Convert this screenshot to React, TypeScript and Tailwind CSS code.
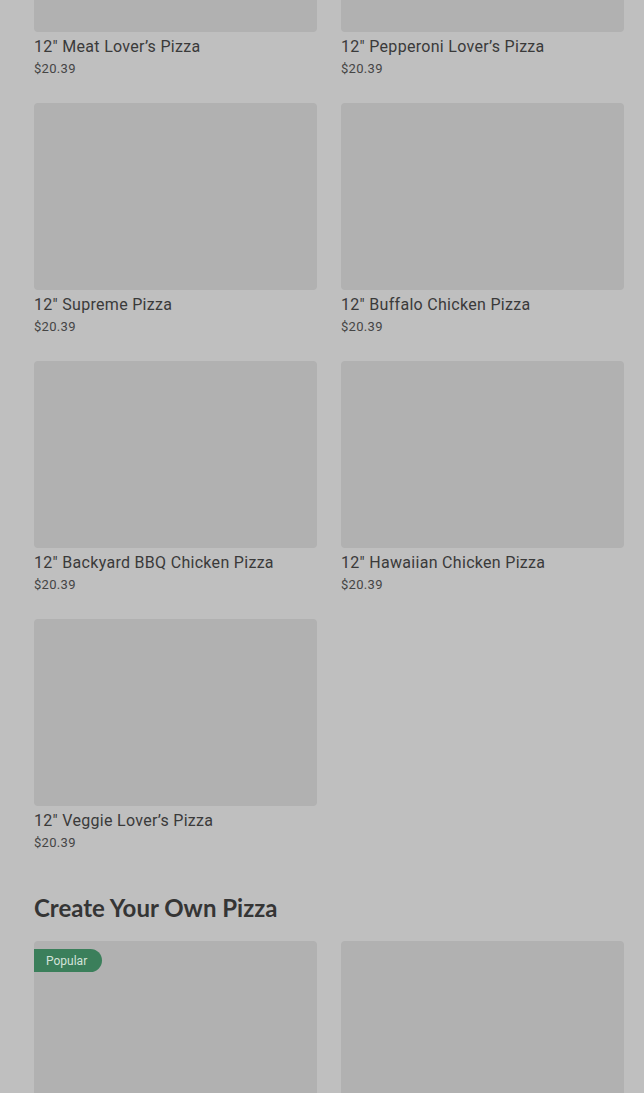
const pizzas = [
  "12\" Meat Lover’s Pizza",
  "12\" Pepperoni Lover’s Pizza",
  "12\" Supreme Pizza",
  "12\" Buffalo Chicken Pizza",
  "12\" Backyard BBQ Chicken Pizza",
  "12\" Hawaiian Chicken Pizza",
  "12\" Veggie Lover’s Pizza",
];

function PizzaCard({ name }: { name: string }) {
  return (
    <div className="flex flex-col">
      <div className="h-[187px] w-full rounded-sm bg-[#b1b1b1]" />
      <p className="mt-[5px] text-[16px] leading-5 tracking-[0.3px] text-[#3a3a3a]">{name}</p>
      <p className="mt-[3px] text-[13px] leading-[18px] tracking-[0.3px] text-[#454545]">$20.39</p>
    </div>
  );
}

export default function App() {
  return (
    <div
      className="h-[1093px] overflow-hidden bg-[#bfbfbf] pl-[34px] pr-[20px]"
      style={{ fontFamily: "Roboto, 'Noto Sans', sans-serif" }}
    >
      {/* list is scrolled, first row partly out of view */}
      <div className="-mt-[155px] grid grid-cols-2 gap-x-6 gap-y-[25px]">
        {pizzas.map((p) => (
          <PizzaCard key={p} name={p} />
        ))}
      </div>

      <h2
        className="mt-10 text-[24px] font-bold leading-8 text-[#353535]"
        style={{ fontFamily: "Lato, 'Open Sans', sans-serif" }}
      >
        Create Your Own Pizza
      </h2>

      <div className="mt-[17px] grid grid-cols-2 gap-x-6">
        <div className="relative h-[187px] rounded-sm bg-[#b1b1b1]">
          <span className="absolute left-0 top-2 flex h-[23px] items-center rounded-r-full bg-[#3b7f5b] pl-3 pr-[15px] text-[12px] text-[#d4e3da]">
            Popular
          </span>
        </div>
        <div className="h-[187px] rounded-sm bg-[#b1b1b1]" />
      </div>
    </div>
  );
}
